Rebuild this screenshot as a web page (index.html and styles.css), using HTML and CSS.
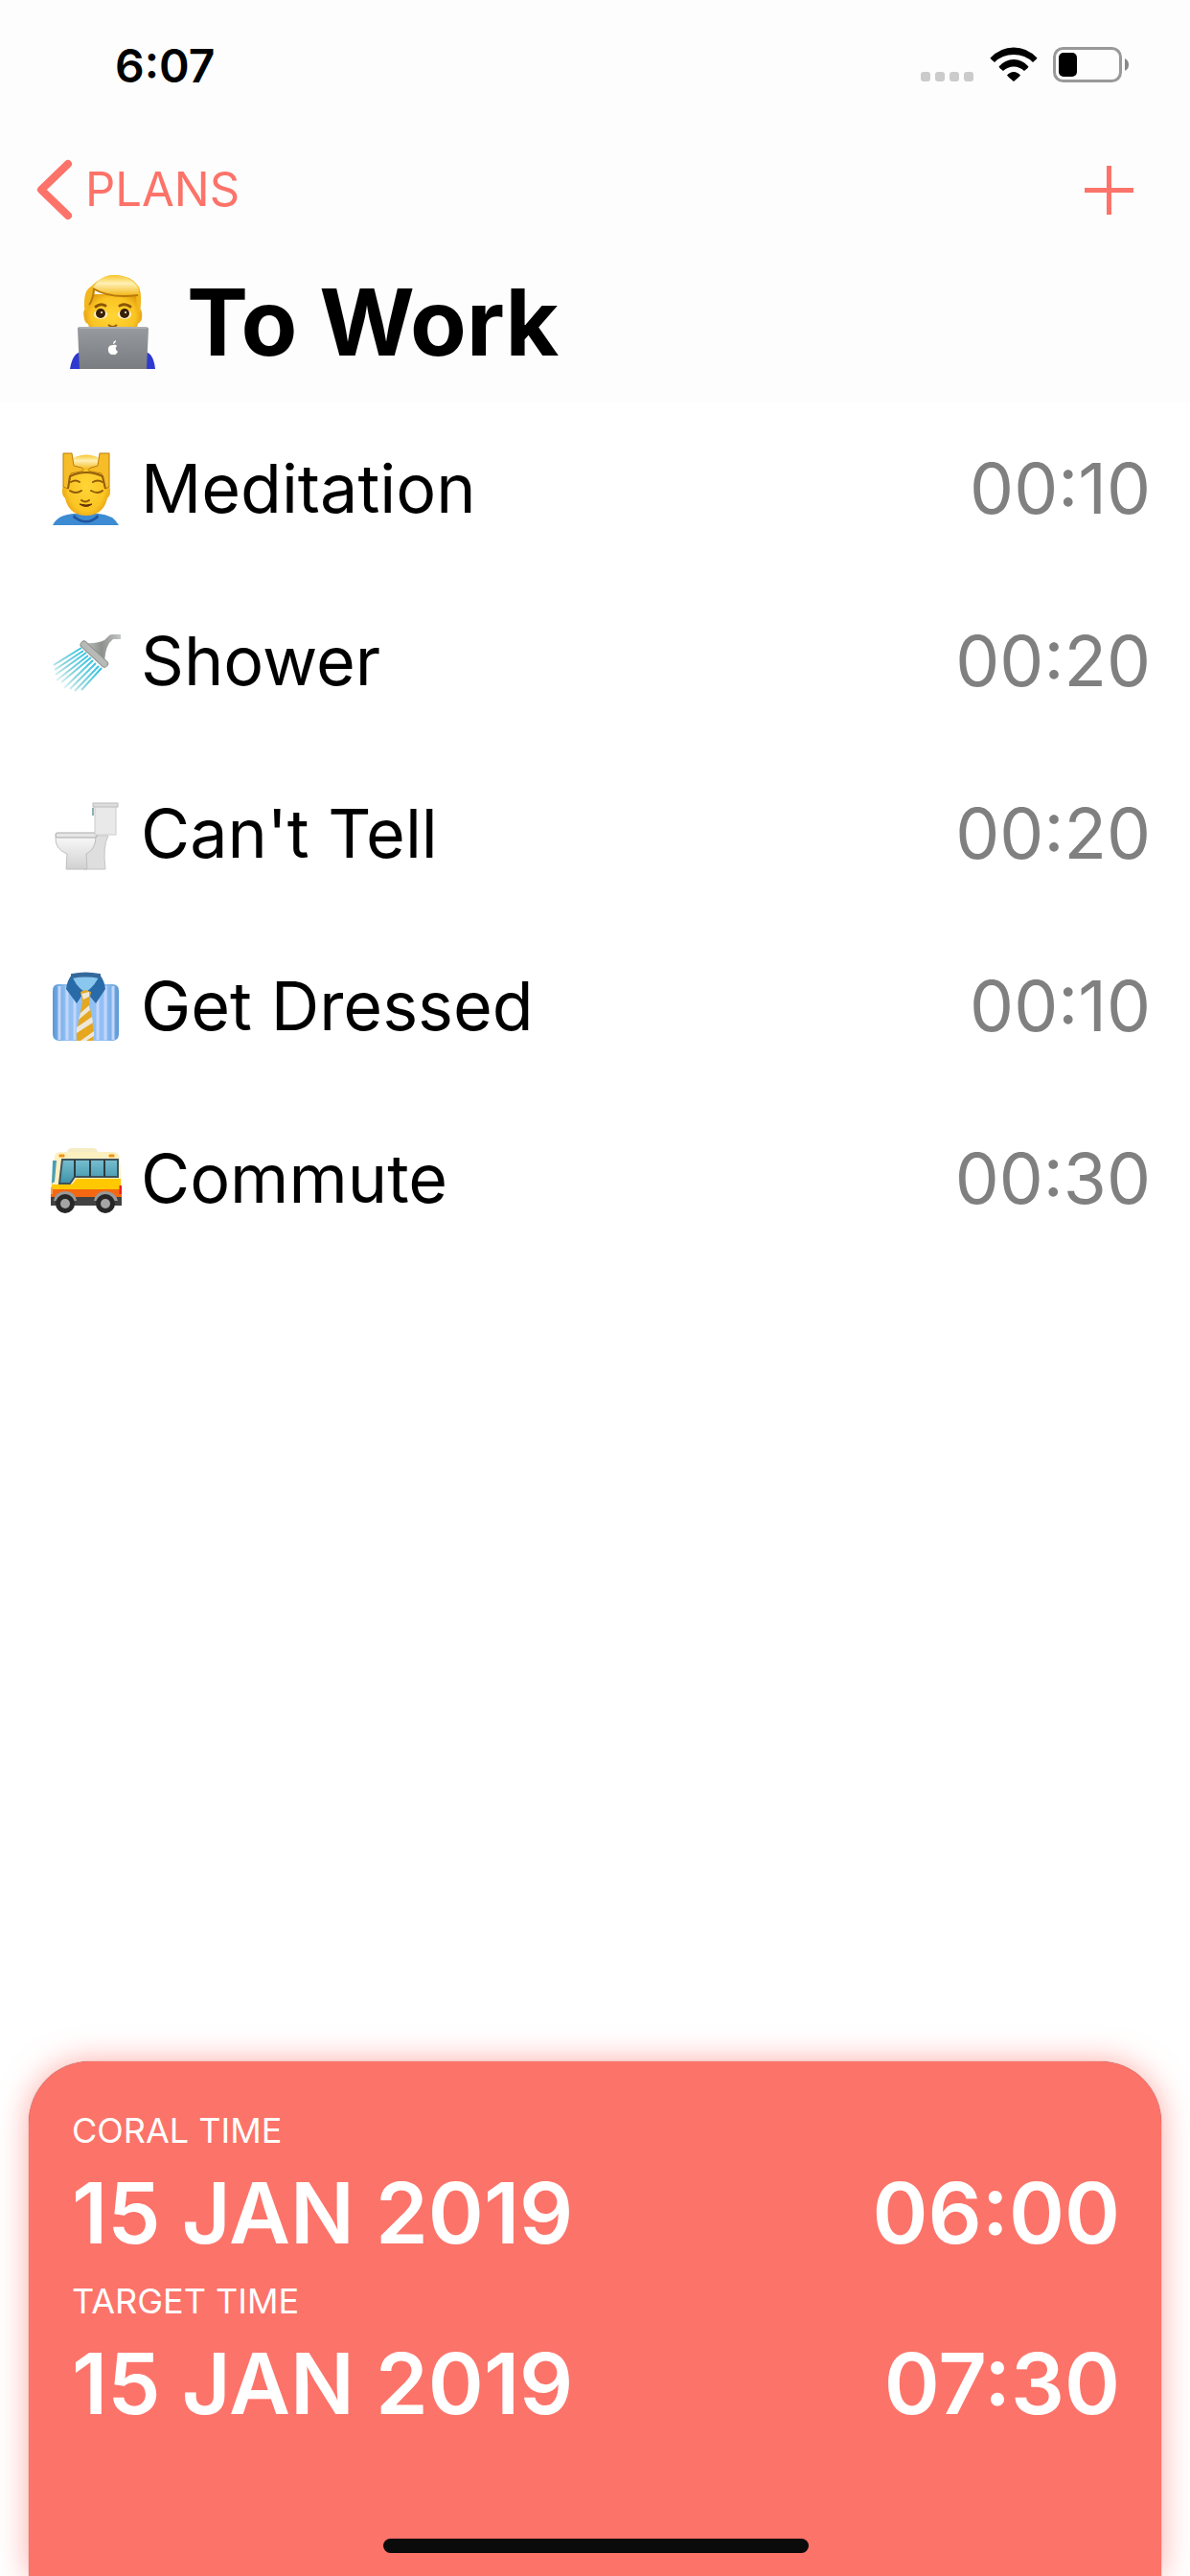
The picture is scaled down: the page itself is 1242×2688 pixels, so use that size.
FILE: index.html
```html
<!DOCTYPE html>
<html lang="en">
<head>
<meta charset="utf-8">
<meta name="viewport" content="width=device-width, initial-scale=1">
<title>To Work</title>
<link rel="stylesheet" href="styles.css">
</head>
<body>
<div class="screen">
  <header class="top">
    <div class="status">
      <time class="clock">6:07</time>
      <div class="indicators">
        <svg class="signal" viewBox="0 0 55 10" aria-hidden="true"><g fill="#cbcbcb"><rect width="10" height="10" rx="3"/><rect x="15" width="10" height="10" rx="3"/><rect x="30" width="10" height="10" rx="3"/><rect x="45" width="10" height="10" rx="3"/></g></svg>
        <svg class="wifi" viewBox="0 0 50 36" aria-hidden="true"><path d="M0.500 11.500Q11 .500 25 .500T49.500 11.500Q49.500 12 45 16Q37 8 25 8T5 16Q.500 12 .500 11.500ZM9.500 20.500Q16 13 25 13T40.500 20.500Q40 22 36 25Q31 20.500 25 20.500T14 25Q10 22 9.500 20.500ZM18 29.500Q21 26 25 26T32 29.500Q31 31 25 36Q19 31 18 29.500Z"/></svg>
        <svg class="battery" viewBox="0 0 80 38" aria-hidden="true"><rect x="1.500" y="1.500" width="69" height="34" rx="9" fill="none" stroke="#999" stroke-width="3"/><rect x="6" y="6" width="19" height="25" rx="5"/><path d="M75 12Q79 14 79 18.500T75 25Z" fill="#888"/></svg>
      </div>
    </div>
    <nav class="bar">
      <a class="back" href="#plans"><svg class="chevron" viewBox="0 0 38 64" aria-hidden="true"><path d="M33 5 5 32 33 59" fill="none" stroke="#fc7369" stroke-width="8" stroke-linecap="round" stroke-linejoin="round"/></svg>PLANS</a>
      <button class="add" type="button" aria-label="Add step"><svg viewBox="0 0 51 51" aria-hidden="true"><path d="M23 0h5v23h23v5H28v23h-5V28H0v-5h23Z" fill="#fc7369"/></svg></button>
    </nav>
    <h1 class="title">
      <svg class="title-icon" viewBox="0 0 90 98" aria-hidden="true">
        <defs>
          <radialGradient id="face" cx=".5" cy=".5" r=".6"><stop offset="0" stop-color="#ffd535"/><stop offset=".7" stop-color="#fbc524"/><stop offset="1" stop-color="#e39d0e"/></radialGradient>
          <linearGradient id="hair" x1="0" y1="0" x2="0" y2="1"><stop offset="0" stop-color="#f9c52b"/><stop offset=".4" stop-color="#fff0b5"/><stop offset="1" stop-color="#f3b818"/></linearGradient>
          <linearGradient id="lid" x1="0" y1="0" x2="0" y2="1"><stop offset="0" stop-color="#979a9e"/><stop offset="1" stop-color="#797c80"/></linearGradient>
        </defs>
        <path d="M0 98Q3 80 13 80H77Q87 80 89 98Z" fill="#2d39cf"/>
        <path d="M16 35Q13 37 15 46Q16 51 20 51H69Q73 51 75 46Q76 37 73 35Z" fill="#eeab18"/>
        <path d="M18 20H72V44Q71 62 58 66H32Q19 62 18 44Z" fill="url(#face)"/>
        <path d="M22 12Q34 0 46 0Q63 0 71 11Q76 18 73 40L70 34 69 22Q42 24 26 16Q24 27 20 30L18 41 15 34Q14 16 22 12Z" fill="#f2b71f"/>
        <path d="M24 13Q32 0 46 0Q61 0 70 11Q73 16 71 21Q42 24 24 13Z" fill="url(#hair)"/>
        <path d="M24 14Q42 25 71 21M25 15Q24 26 20 31" fill="none" stroke="#b87a0c" stroke-width="2"/>
        <path d="M27 33Q32 29 37 32M52 32Q58 29 63 33" fill="none" stroke="#8b5608" stroke-width="3" stroke-linecap="round"/>
        <ellipse cx="32" cy="41" rx="7" ry="5" fill="#fff3c9"/><ellipse cx="57" cy="41" rx="7" ry="5" fill="#fff3c9"/>
        <circle cx="32" cy="40" r="5" fill="#3a2005"/><circle cx="57" cy="40" r="5" fill="#3a2005"/><circle cx="33" cy="39" r="1" fill="#fff"/><circle cx="58" cy="39" r="1" fill="#fff"/>
        <path d="M40 52Q45 56 49 52" fill="none" stroke="#9a5c08" stroke-width="2"/>
        <path d="M8 56Q8 54 11 54H78Q82 54 82 56L80 98H10Z" fill="url(#lid)"/><path d="M10 55H80" stroke="#c3c5c8" stroke-width="1"/>
        <path d="M45 73Q48 72 49 74Q46 77 50 80Q48 84 46 83H43Q39 81 40 76Q41 73 45 73ZM45 72Q45 69 48 68Q48 71 45 72Z" fill="#fff"/>
      </svg>
      <span>To Work</span>
    </h1>
  </header>
  <main class="content">
    <ul class="steps">
      <li class="step">
        <svg class="icon" viewBox="0 0 74 78" aria-hidden="true">
          <path d="M2 77Q7 66 24 65H50Q65 66 71 77Z" fill="#3d8bd2"/><path d="M24 66Q37 78 49 66L50 69Q37 80 23 69Z" fill="#20559e"/>
          <rect x="12" y="33" width="50" height="17" rx="7" fill="#edb01d"/><path d="M14 30Q16 4 37 4T60 30V44Q57 67 37 67T14 44Z" fill="url(#face)"/>
          <path d="M18 10Q37-3 56 10L52 19H22Z" fill="url(#hair)"/>
          <path d="M13 2H22L24 15 32 17Q37 20 31 21L21 23 18 39 13 37ZM61 2H51L49 15 42 17Q36 20 42 21L53 23 57 39 61 37Z" fill="#f6bd28" stroke="#bd7b0c" stroke-width="1"/>
          <path d="M18 39 20 26Q37 18 54 26L57 39" fill="none" stroke="#93600c" stroke-width="2"/>
          <path d="M21 32Q26 29 30 32M44 32Q49 29 54 32M20 41Q26 45 32 41M42 41Q49 45 54 41M32 51Q36 54 40 51" fill="none" stroke="#8f5a08" stroke-width="2" stroke-linecap="round"/><path d="M30 55Q37 57 43 55Q37 60 30 55Z" fill="#633107" stroke="#633107"/>
        </svg>
        <span class="name">Meditation</span><time class="length">00:10</time>
      </li>
      <li class="step">
        <svg class="icon" viewBox="0 0 74 78" aria-hidden="true">
          <defs><linearGradient id="spray" gradientUnits="userSpaceOnUse" x1="44" y1="34" x2="10" y2="66"><stop offset="0" stop-color="#28bfe2"/><stop offset=".6" stop-color="#8bd4dc"/><stop offset="1" stop-color="#eef7f7"/></linearGradient><linearGradient id="metal"><stop offset="0" stop-color="#c9cbc8"/><stop offset=".5" stop-color="#8d918e"/><stop offset="1" stop-color="#c5c7c5"/></linearGradient></defs>
          <path d="M32 25 3 43M34 28 4 48M37 30 5 53M39 33 6 59M42 35 11 61M44 38 14 67M47 41 20 68M50 44 25 70M53 46 32 69" fill="none" stroke="url(#spray)" stroke-width="2"/>
          <path d="M33 20Q47 21 56 17L61 12Q62 11 65 11H73V16H65L61 20Q56 28 56 44Z" fill="url(#metal)"/>
          <rect x="27" y="28" width="36" height="7" rx="3" transform="rotate(43 45 32)" fill="#b7bab7" stroke="#8f928f"/>
        </svg>
        <span class="name">Shower</span><time class="length">00:20</time>
      </li>
      <li class="step">
        <svg class="icon" viewBox="0 0 74 78" aria-hidden="true">
          <defs><linearGradient id="china" x1="0" y1="0" x2="0" y2="1"><stop offset="0" stop-color="#f8f8f8"/><stop offset="1" stop-color="#d1d1d1"/></linearGradient></defs>
          <path d="M39 41H60Q54 52 57 76H34Z" fill="#dedede" stroke="#c5c5c5"/>
          <path d="M5 42H47Q47 55 37 60L38 76H16L17 60Q4 55 5 42Z" fill="url(#china)" stroke="#bfbfbf"/>
          <rect x="5" y="38" width="43" height="5" rx="2" fill="#e6e6e6" stroke="#aaa"/>
          <rect x="46" y="10" width="22" height="30" fill="#e9e9e9" stroke="#ccc"/><rect x="44" y="7" width="26" height="4" fill="#ddd" stroke="#bbb"/><path d="M44 12V20" stroke="#8bb0b4" stroke-width="2"/>
        </svg>
        <span class="name">Can't Tell</span><time class="length">00:20</time>
      </li>
      <li class="step">
        <svg class="icon" viewBox="0 0 74 78" aria-hidden="true">
          <defs><linearGradient id="shirt"><stop offset="0" stop-color="#5b99d5"/><stop offset=".2" stop-color="#91c0f3"/><stop offset=".8" stop-color="#91c0f3"/><stop offset="1" stop-color="#5b99d5"/></linearGradient></defs>
          <path d="M2 23Q2 16 8 16H64Q71 16 71 23V68Q71 75 64 75H9Q2 75 2 68Z" fill="url(#shirt)"/>
          <path d="M9 18V74M17 18V74M25 18V74M49 18V74M57 18V74M65 18V74" stroke="#c3d6fb" stroke-width="3"/>
          <path d="M22 8Q37 5 51 8L48 23 36 28 23 21Z" fill="#8ac7ee"/>
          <path d="M22 6Q17 12 16 21L27 36 35 24Q25 17 22 6ZM51 6Q56 12 57 21L47 36 37 24Q47 17 51 6Z" fill="#286ba8"/><path d="M22 6Q36 3 51 6V9Q36 6 22 9Z" fill="#34699b" stroke="#34699b" stroke-width="2"/>
          <path d="M31 24 36 22 42 24 40 34 45 66 44 75H27V66L33 34Z" fill="#e4a71e"/><path d="M32 26 40 24V29L34 32ZM31 46 40 38 41 43 29 53ZM27 61 43 50 44 56 27 67ZM31 75 45 65V70L37 75Z" fill="#eee7d8"/>
        </svg>
        <span class="name">Get Dressed</span><time class="length">00:10</time>
      </li>
      <li class="step">
        <svg class="icon" viewBox="0 0 74 78" aria-hidden="true">
          <defs><linearGradient id="glass" x1="0" y1="0" x2="0" y2="1"><stop offset="0" stop-color="#77bfd0"/><stop offset="1" stop-color="#3f92a9"/></linearGradient></defs>
          <path d="M17 12Q17 7 22 7H44Q49 7 49 12Z" fill="#f5ecc6"/>
          <path d="M4 17Q4 11 10 11H65Q71 11 72 18L74 48V62H0V44Z" fill="#fdf0c0"/><path d="M1 45H22L27 39H73V51H1Z" fill="#ffc800"/><path d="M0 50H74V58H0Z" fill="#f56811"/><path d="M0 58H74V67H0Z" fill="#414141"/>
          <path d="M2 20H6L4 42 1 44Z" fill="#4b9eb3"/><path d="M12 19H70V37H25L20 44H9Z" fill="url(#glass)" stroke="#405258" stroke-width="2"/><path d="M25 19V37M41 19V37M56 19V37" stroke="#303b40" stroke-width="2"/>
          <path d="M9 14H14V16H9ZM61 14H66V16H61Z" fill="#f29111" stroke="#f29111"/><path d="M73 46V55" stroke="#e52220" stroke-width="3"/><path d="M1 48V55" stroke="#f2a35b" stroke-width="2"/>
          <path d="M3 62Q5 52 15 52T27 62ZM45 62Q47 52 57 52T70 62Z" fill="#999"/>
          <circle cx="15" cy="65" r="10" fill="#272727"/><circle cx="57" cy="65" r="10" fill="#272727"/><circle cx="15" cy="65" r="5" fill="#a5a5a5"/><circle cx="57" cy="65" r="5" fill="#a5a5a5"/>
        </svg>
        <span class="name">Commute</span><time class="length">00:30</time>
      </li>
    </ul>
  </main>
  <section class="card">
    <div class="entry"><h2 class="label">CORAL TIME</h2><div class="moment"><span>15 JAN 2019</span><time>06:00</time></div></div>
    <div class="entry"><h2 class="label">TARGET TIME</h2><div class="moment"><span>15 JAN 2019</span><time>07:30</time></div></div>
    <div class="home"></div>
  </section>
</div>
</body>
</html>
```
FILE: styles.css
```css
* { box-sizing: border-box; margin: 0; padding: 0; }
body { background: #fff; color: #000; font-family: Inter, "Liberation Sans", sans-serif; }
svg { display: block; flex: none; }
.screen { display: flex; flex-direction: column; min-height: 100vh; overflow: hidden; }
.top { background: #fdfdfd; padding-bottom: 8px; }
.status { display: flex; justify-content: space-between; padding: 40px 63px 32px 120px; }
.clock { font-size: 48px; font-weight: 600; line-height: 58px; }
.indicators { display: flex; align-items: flex-start; padding-top: 9px; }
.signal { width: 55px; height: 10px; margin: 26px 17px 0 0; }
.wifi { width: 50px; height: 36px; margin-right: 16px; }
.battery { width: 80px; height: 38px; }
.bar { display: flex; align-items: center; justify-content: space-between; padding: 36px 59px 36px 38px; }
.back { display: flex; align-items: center; gap: 13px; color: #fc7369; font-size: 49px; line-height: 64px; text-decoration: none; }
.chevron { width: 38px; height: 64px; }
.add { border: 0; background: none; }
.add svg { width: 51px; height: 51px; }
.title { display: flex; align-items: center; gap: 32px; padding: 10px 44px 16px 73px; font-size: 96px; font-weight: 700; line-height: 120px; }
.title-icon { width: 90px; height: 98px; }
.content { flex: 1; }
.steps { list-style: none; }
.step { display: flex; align-items: center; padding: 46px 41px 46px 53px; font-size: 73px; line-height: 88px; }
.icon { width: 74px; height: 78px; }
.name { flex: 1; padding-left: 20px; font-size: 70px; }
.length { color: #808080; }
.card { margin: 0 30px; padding: 52px 43px 24px 45px; display: flex; flex-direction: column; background: #fc7369; color: #fff; border-radius: 64px 64px 0 0; box-shadow: 0 0 1px #7a3a36, 0 0 32px rgba(252, 115, 105, .6); }
.entry { padding-bottom: 6px; }
.label { font-size: 36px; font-weight: 400; line-height: 40px; }
.moment { display: flex; justify-content: space-between; font-size: 88px; font-weight: 600; line-height: 132px; }
.home { width: 444px; max-width: 60%; height: 15px; margin: 90px auto 0; background: #0b0b0b; border-radius: 8px; }
```
